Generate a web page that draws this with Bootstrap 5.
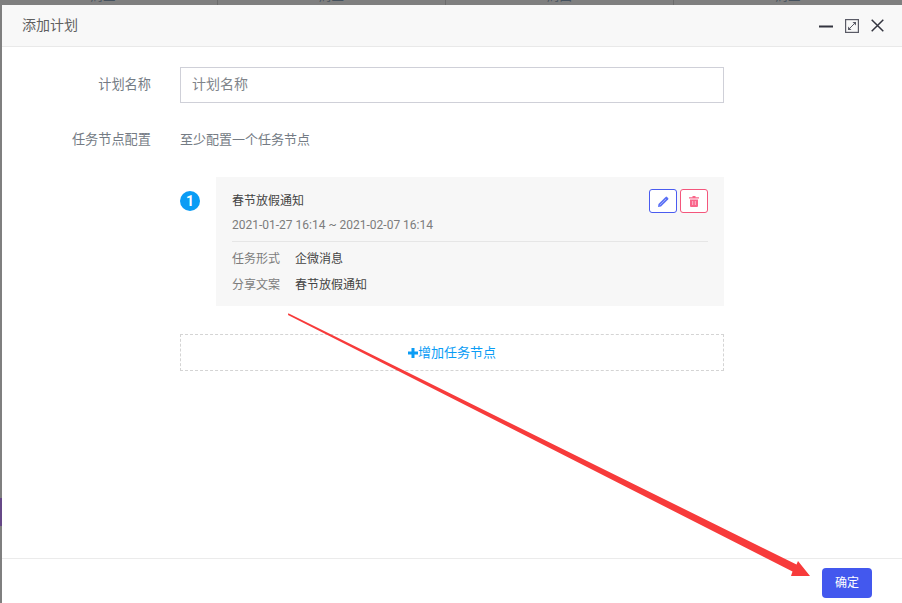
<!DOCTYPE html>
<html lang="zh">
<head>
<meta charset="utf-8">
<title>添加计划</title>
<link href="https://cdn.jsdelivr.net/npm/bootstrap@5.3.0/dist/css/bootstrap.min.css" rel="stylesheet">
<style>
html,body{height:100%;overflow:hidden}
body{background:#7f7f7f;font-family:"Roboto","Noto Sans CJK SC",sans-serif;color:#555;display:flex;flex-direction:column;height:603px}
.bg-strip{height:5px;overflow:hidden;display:flex;align-items:flex-end;color:#46525e;font-size:12.5px;line-height:14px;flex:none}
.bg-cell{height:5px;border-right:1px solid #6c6c6c;display:flex;justify-content:center;align-items:flex-end}
.bg-cell span{margin-bottom:1px}
.c1{width:218px;padding-right:11px}.c2{width:228px}.c3{width:228px}.c4{width:228px;border-right:0}
.shell{flex:1;display:flex;min-height:0}
.side{width:2px;flex:none;display:flex;flex-direction:column}
.side i{display:block;height:28px;margin-top:493px;background:#664887}
.dlg{flex:1;background:#fff;display:flex;flex-direction:column;min-width:0}
.dlg-head{height:42px;background:#f8f8f8;border-bottom:1px solid #e9e9e9;padding:0 18px 0 20px;color:#5f5f5f;font-size:14px;flex:none}
.head-tools{gap:12px}
.dlg-body{flex:1;padding:20px 0 0 0}
.dlg-foot{height:45px;border-top:1px solid #ebebeb;padding:9px 30px 0 0;flex:none}
.lbl{width:149px;text-align:right;font-size:13.2px;color:#747b84;flex:none}
.fld{width:544px;margin-left:29px}
.name-input{height:36px;border:1px solid #cfd0d8;border-radius:0;font-size:14px;padding:0 11px 2px;color:#555}
.name-input::placeholder{color:#80848a}
.cfg-row{margin-top:27px}
.hint{font-size:13px;color:#747b84;line-height:20px}
.fld-wrap{margin-left:178px;width:544px;margin-top:27px}
.num{width:20px;height:20px;border-radius:50%;background:#0a9cf5;color:#fff;font-size:14px;font-weight:700;line-height:20px;text-align:center;flex:none;margin-top:14px}
.node{width:508px;background:#f7f7f7;margin-left:16px;padding:12px 16px 10px 16px;height:129px;font-size:12px}
.node-head{padding-top:3px}
.node-title{color:#444;line-height:18px}
.node-date{color:#7c7c7c;line-height:18px;margin-top:6px;font-size:12px}
.node-sep{border-top:1px solid #e6e6e6;margin:7px 0 8px}
.kv{line-height:18px;margin-bottom:8px}
.kv span{color:#7c7c7c;width:63px;display:inline-block}
.kv b{font-weight:400;color:#444}
.act-group{gap:3px}
.act{width:28px;height:24px;padding:0;background:#fff;border-radius:3px;display:flex;align-items:center;justify-content:center}
.act-edit{border:1px solid #4a5cf0}
.act-del{border:1px solid #f4567c}
.add-node{height:37px;border:1px dashed #d4d4d4;color:#0a9cf5;font-size:13px;margin-top:28px}
.ok-btn{width:50px;height:30px;padding:0;background:#4358ee;border:0;border-radius:4px;color:#fff;font-size:12px}
.arrow{position:absolute;left:0;top:0;width:902px;height:603px;pointer-events:none}
</style>
</head>
<body>
<div class="bg-strip">
  <div class="bg-cell c1"><span>周二</span></div>
  <div class="bg-cell c2"><span>周二</span></div>
  <div class="bg-cell c3"><span>周四</span></div>
  <div class="bg-cell c4"><span>周五</span></div>
</div>
<div class="shell">
  <div class="side"><i></i></div>
  <div class="dlg">
    <div class="dlg-head d-flex align-items-center justify-content-between">
      <span>添加计划</span>
      <div class="d-flex align-items-center head-tools">
        <svg width="14" height="14" viewBox="0 0 14 14"><path d="M0 7.500h14" stroke="#33343f" stroke-width="2"/></svg>
        <svg width="14" height="14" viewBox="0 0 14 14" fill="none" stroke="#5a5b66"><rect x=".6" y=".6" width="12.800" height="12.800" stroke-width="1.200"/><path d="M3.500 10.500l7-7" stroke-width="1"/><path d="M7.500 3h3.500v3.500zM3 7.500V11h3.500z" fill="#5a5b66" stroke="none"/></svg>
        <svg width="13" height="13" viewBox="0 0 13 13"><path d="M.7.700l11.600 11.600M12.300.7L.7 12.300" stroke="#33343f" stroke-width="1.500"/></svg>
      </div>
    </div>
    <div class="dlg-body">
      <div class="d-flex align-items-center">
        <div class="lbl">计划名称</div>
        <div class="fld"><input class="form-control name-input" placeholder="计划名称"></div>
      </div>
      <div class="d-flex cfg-row align-items-center">
        <div class="lbl">任务节点配置</div>
        <div class="fld hint">至少配置一个任务节点</div>
      </div>
      <div class="fld-wrap">
        <div class="d-flex align-items-start">
          <div class="num">1</div>
          <div class="node">
            <div class="d-flex justify-content-between">
              <div class="node-head">
                <div class="node-title">春节放假通知</div>
                <div class="node-date">2021-01-27 16:14 ~ 2021-02-07 16:14</div>
              </div>
              <div class="d-flex act-group align-items-start">
                <button class="act act-edit" aria-label="编辑"><svg width="11" height="11" viewBox="0 0 11 11"><path d="M0 11l.5-3L7.600.900a1 1 0 0 1 1.400 0l1.100 1.100a1 1 0 0 1 0 1.400L3 10.500z" fill="#5a70f5"/><path d="M1.800 9.200L8 3" stroke="#dfe4fd" stroke-width=".5"/></svg></button>
                <button class="act act-del" aria-label="删除"><svg width="10" height="11" viewBox="0 0 10 11"><path d="M3.500 0h3v1.300H10v1.200H0V1.300h3.500zM1 3.500h8V10a1 1 0 0 1-1 1H2a1 1 0 0 1-1-1z" fill="#f9668a"/><path d="M3.700 5v4M6.300 5v4" stroke="#fde" stroke-width=".7"/></svg></button>
              </div>
            </div>
            <div class="node-sep"></div>
            <div class="kv"><span>任务形式</span><b>企微消息</b></div>
            <div class="kv"><span>分享文案</span><b>春节放假通知</b></div>
          </div>
        </div>
        <div class="add-node d-flex align-items-center justify-content-center"><svg width="10" height="10" viewBox="0 0 10 10"><path d="M5 0v10M0 5h10" stroke="#0a9cf5" stroke-width="3"/></svg>增加任务节点</div>
      </div>
    </div>
    <div class="dlg-foot d-flex justify-content-end align-items-start">
      <button class="ok-btn">确定</button>
    </div>
  </div>
</div>
<svg class="arrow" viewBox="0 0 902 603"><path d="M288.300 313.300L796.500 564.500 798 561 810 576 791 576 792.500 571.500 288 315z" fill="#f73b3b"/></svg>
</body>
</html>
